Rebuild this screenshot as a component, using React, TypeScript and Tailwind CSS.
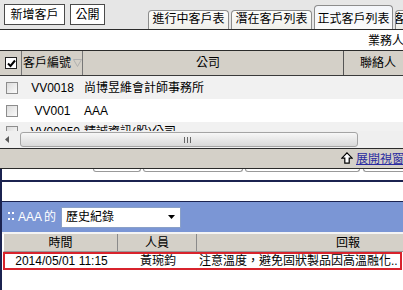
import React from 'react';

function Tab({ label, width, active }: { label: string; width: number; active?: boolean }) {
  return (
    <div
      style={{ width }}
      className={`shrink-0 flex items-end justify-center pb-[4px] border border-b-0 border-[#8c8c8c] rounded-t-[4px] overflow-hidden whitespace-nowrap
        ${active ? 'h-[24px] bg-gradient-to-b from-[#f4f6fa] to-[#fbfbfb]' : 'h-[19px] bg-gradient-to-b from-[#fdfdfb] to-[#efefea]'}`}
    >
      {label}
    </div>
  );
}

function RowCheck() {
  return <div className="w-[12px] h-[12px] border border-[#8d8d8d] bg-gradient-to-br from-[#dcdcdc] to-[#fbfbfb]" />;
}

function Row({ bg, code, company, h }: { bg: string; code: string; company: string; h: string }) {
  return (
    <div className={`flex items-center ${bg} ${h} overflow-hidden`}>
      <div className="w-[22px] shrink-0 flex justify-center pl-[2px]">
        <RowCheck />
      </div>
      <div className="w-[61px] shrink-0 text-center text-[12px]">{code}</div>
      <div className="pl-[1px] whitespace-nowrap">{company}</div>
    </div>
  );
}

export default function App() {
  return (
    <div className="w-[403px] h-[290px] overflow-hidden bg-white text-[12px] leading-none text-black font-['Liberation_Sans','Noto_Sans_CJK_TC',sans-serif] flex flex-col">
      {/* Top toolbar with tabs */}
      <div className="h-[30px] shrink-0 bg-[#e6e6e6] border-b border-[#2b2b2b] flex">
        <div className="flex gap-[5px] pl-[4px] pt-[4px] items-start">
          <button className="w-[61px] h-[21px] bg-white border border-[#4a4a4a] leading-none">新增客戶</button>
          <button className="w-[35px] h-[21px] bg-white border border-[#4a4a4a] leading-none">公開</button>
        </div>
        <div className="ml-[43px] flex items-end gap-[2px] self-end">
          <Tab label="進行中客戶表" width={81} />
          <Tab label="潛在客戶列表" width={81} />
          <Tab label="正式客戶列表" width={79} active />
          <Tab label="客戶" width={20} />
        </div>
      </div>

      {/* filter line */}
      <div className="h-[20px] shrink-0 flex justify-end items-center">
        <div className="w-[35px] overflow-hidden whitespace-nowrap pt-[2px]">業務人員</div>
      </div>

      {/* Customer table */}
      <div className="border-t border-[#2b2b2b] shrink-0">
        <div className="h-[25px] bg-[#d4d0c8] border-b border-[#3a3a3a] flex">
          <div className="w-[22px] shrink-0 border-r border-[#777] flex items-center justify-center pl-[1px]">
            <div className="w-[12px] h-[12px] bg-white border border-[#222] flex items-center justify-center">
              <svg width="9" height="9" viewBox="0 0 9 9">
                <path d="M1 4.5 L3.5 7 L8 1.5" fill="none" stroke="#000" strokeWidth="2" />
              </svg>
            </div>
          </div>
          <div className="w-[61px] shrink-0 border-r border-[#777] flex items-center pl-[1px] gap-[2px]">
            <span>客戶編號</span>
            <svg width="9" height="8" viewBox="0 0 9 8">
              <path d="M0.5 0.5 H8.5 L4.5 7.5 Z" fill="none" stroke="#b0b0b0" />
            </svg>
          </div>
          <div className="w-[261px] shrink-0 border-r border-[#555] flex items-center justify-center pr-[10px]">公司</div>
          <div className="flex-1 flex items-center pl-[16px] whitespace-nowrap">聯絡人</div>
        </div>
        <Row bg="bg-[#f1f1f1]" h="h-[23px]" code="VV0018" company="尚博昱維會計師事務所" />
        <Row bg="bg-white" h="h-[23px]" code="VV001" company="AAA" />
        <div className="h-[9px] bg-[#f1f1f1] overflow-hidden flex items-start pt-[4px]">
          <div className="w-[22px] shrink-0 flex justify-center pl-[2px]">
            <RowCheck />
          </div>
          <div className="w-[61px] shrink-0 text-right pr-[3px]">VV00050</div>
          <div className="pl-[1px] whitespace-nowrap">精誠資訊(股)公司</div>
        </div>

        {/* horizontal scrollbar */}
        <div className="h-[17px] bg-[#efefef] flex items-center">
          <div className="w-[20px] h-full flex items-center pl-[5px]">
            <svg width="4" height="7" viewBox="0 0 4 7">
              <path d="M4 0 L0 3.5 L4 7 Z" fill="#5a5a5a" />
            </svg>
          </div>
          <div className="w-[338px] h-[15px] rounded-[3px] border border-[#a4a4a4] bg-gradient-to-b from-[#f7f7f7] to-[#d9d9d9] flex items-center justify-center gap-[2px] pr-[4px]">
            <span className="w-px h-[6px] bg-[#666]" />
            <span className="w-px h-[6px] bg-[#666]" />
            <span className="w-px h-[6px] bg-[#666]" />
          </div>
        </div>
      </div>

      {/* expand toolbar */}
      <div className="h-[21px] shrink-0 bg-[#d4d0c8] border-t border-b border-[#2b2b2b] flex items-center justify-end gap-[3px]">
        <svg width="12" height="13" viewBox="0 0 12 13">
          <path d="M6 0.8 L11.2 6.2 H8.2 V11.2 H3.8 V6.2 H0.8 Z" fill="#fff" stroke="#000" strokeWidth="1.2" />
        </svg>
        <span className="w-[47px] overflow-hidden whitespace-nowrap text-[#2a2aa0] underline">展開視窗</span>
      </div>

      {/* lower panel */}
      <div className="flex-1 border-l-2 border-[#1b2350] flex flex-col">
        <div className="h-[13px] shrink-0 border-b-2 border-[#1b2350] flex items-start">
          <div className="w-[91px] shrink-0" />
          <div className="w-[48px] h-[3px] border border-t-0 border-[#999] rounded-b-[3px]" />
          <div className="w-[2px]" />
          <div className="w-[100px] h-[3px] border border-t-0 border-[#999] rounded-b-[3px]" />
          <div className="w-[2px]" />
          <div className="w-[115px] h-[3px] border border-t-0 border-[#999] rounded-b-[3px]" />
          <div className="w-[3px]" />
          <div className="flex-1 h-[3px] border border-t-0 border-r-0 border-[#999] rounded-bl-[3px]" />
        </div>
        <div className="h-[19px] shrink-0" />

        {/* history panel */}
        <div className="h-[31px] shrink-0 bg-[#7b96d5] border-t border-[#1b2350] flex items-center">
          <div className="w-[6px] h-[10px] ml-[6px] grid grid-cols-2 gap-x-[2px] gap-y-[2px]">
            <span className="w-[2px] h-[2px] bg-white" />
            <span className="w-[2px] h-[2px] bg-white" />
            <span className="w-[2px] h-[2px] bg-white" />
            <span className="w-[2px] h-[2px] bg-white" />
          </div>
          <span className="ml-[4px] text-white">AAA</span>
          <span className="ml-[2px] text-white">的</span>
          <div className="ml-[5px] w-[120px] h-[21px] bg-white border border-[#8aa0c8] flex items-center justify-between pl-[4px] pr-[5px]">
            <span>歷史紀錄</span>
            <svg width="7" height="4" viewBox="0 0 7 4">
              <path d="M0 0 H7 L3.5 4 Z" fill="#000" />
            </svg>
          </div>
        </div>
        <div className="h-[2px] shrink-0 bg-[#f4f4f4]" />

        <div className="pl-[1px] flex flex-col">
          <div className="h-[18px] bg-[#d4d0c8] border-l border-white border-b border-b-[#9a9a9a] flex whitespace-nowrap">
            <div className="w-[114px] shrink-0 border-r border-[#8a8a8a] flex items-center justify-center">時間</div>
            <div className="w-[79px] shrink-0 border-r border-[#8a8a8a] flex items-center justify-center">人員</div>
            <div className="w-[302px] shrink-0 flex items-center justify-center">回報</div>
          </div>
          <div className="h-[18px] mr-[1px] border-2 border-[#d8232c] flex items-center whitespace-nowrap overflow-hidden">
            <div className="w-[113px] shrink-0 text-center">2014/05/01 11:15</div>
            <div className="w-[80px] shrink-0 text-center">黃琬鈞</div>
            <div className="pl-[1px]">注意溫度，避免固狀製品因高溫融化..</div>
          </div>
        </div>
      </div>
    </div>
  );
}
